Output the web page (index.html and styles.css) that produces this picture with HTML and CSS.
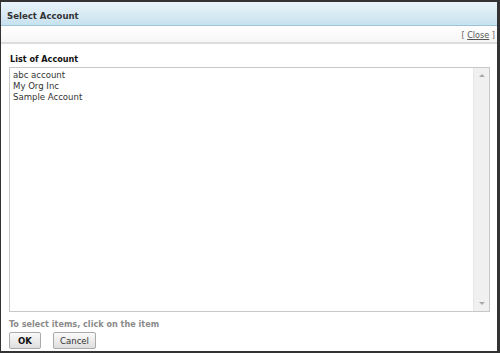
FILE: index.html
```html
<!DOCTYPE html>
<html lang="en">
<head>
    <meta charset="UTF-8">
    <title>Select Account</title>
    <link rel="stylesheet" href="styles.css">
</head>
<body>
    <div class="dialog">
        <div class="title">Select Account</div>
        <div class="close-row">[ <a href="#">Close</a> ]</div>
        <div class="content">
            <div class="label">List of Account</div>
            <div class="listbox">
                <div class="items">
                    <div class="item">abc account</div>
                    <div class="item">My Org Inc</div>
                    <div class="item">Sample Account</div>
                </div>
                <div class="scrollbar">
                    <span class="arrow up"></span>
                    <span class="arrow down"></span>
                </div>
            </div>
            <div class="hint">To select items, click on the item</div>
            <div class="buttons">
                <button class="btn ok">OK</button>
                <button class="btn">Cancel</button>
            </div>
        </div>
    </div>
</body>
</html>
```
FILE: styles.css
```css
* { box-sizing: border-box; }
html, body { margin: 0; padding: 0; background: #fff; }
body { font-family: "DejaVu Sans Condensed", "DejaVu Sans", sans-serif; font-stretch: condensed; font-size: 10px; color: #222; }

.dialog { width: 500px; height: 353px; border: 1px solid #333; border-top-width: 2px; border-right-width: 3px; border-bottom-width: 2px;
          display: flex; flex-direction: column; }
.title { height: 24px; padding: 3px 6px 0; line-height: 21px; font-weight: bold; font-size: 9.5px; color: #333;
         background: linear-gradient(#eaf4fa, #c8e2ef); border-bottom: 1px solid #9cc3d8; }
.close-row { height: 18px; text-align: right; padding-right: 2px; line-height: 18px; font-size: 9px; color: #666;
             border-bottom: 2px solid #ddd; background: linear-gradient(#fff, #f6f6f6); }
.close-row a { color: #555; }

.content { flex: 1; padding: 8px 8px 0 8px; display: flex; flex-direction: column; }
.label { font-weight: bold; font-size: 9px; color: #111; height: 15px; line-height: 14px; margin-left: 1px; }
.listbox { height: 245px; width: 481px; border: 1px solid #c8c8c8; display: flex; }
.items { flex: 1; padding: 1px 3px; }
.item { font-size: 9.5px; line-height: 11px; color: #333; }
.scrollbar { width: 16px; background: #f0f0f0; border-left: 1px solid #e6e6e6; display: flex; flex-direction: column;
             justify-content: space-between; align-items: center; padding: 6px 0; }
.arrow { width: 0; height: 0; border-left: 3px solid transparent; border-right: 3px solid transparent; }
.arrow.up { border-bottom: 3px solid #aaa; }
.arrow.down { border-top: 3px solid #aaa; }

.hint { font-weight: bold; font-size: 9px; color: #8a8a8a; margin-top: 6px; height: 12px; line-height: 12px; }
.buttons { display: flex; gap: 12px; margin-top: 2px; }
.btn { font-family: inherit; font-stretch: condensed; font-size: 9.5px; height: 17px; padding: 0; border: 1px solid #aaa; border-radius: 2px;
       background: linear-gradient(#fafafa, #dedede); color: #333; width: 43px; }
.btn.ok { width: 32px; font-weight: bold; color: #111; }
```
